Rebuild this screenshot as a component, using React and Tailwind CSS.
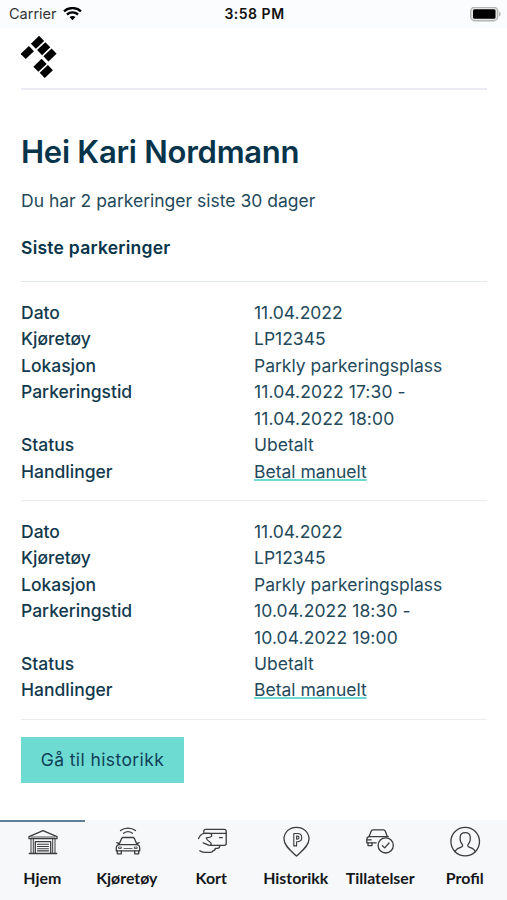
import React, { useState } from "react";

const parkings = [
  {
    id: 1,
    date: "11.04.2022",
    vehicle: "LP12345",
    location: "Parkly parkeringsplass",
    from: "11.04.2022 17:30",
    to: "11.04.2022 18:00",
    status: "Ubetalt",
  },
  {
    id: 2,
    date: "11.04.2022",
    vehicle: "LP12345",
    location: "Parkly parkeringsplass",
    from: "10.04.2022 18:30",
    to: "10.04.2022 19:00",
    status: "Ubetalt",
  },
];

function Icon({ children }) {
  return (
    <svg
      className="overflow-visible"
      width="32"
      height="32"
      viewBox="0 0 32 32"
      fill="none"
      stroke="#3a3c3e"
      strokeWidth="1.3"
      strokeLinecap="round"
      strokeLinejoin="round"
    >
      {children}
    </svg>
  );
}

function GarageIcon() {
  return (
    <Icon>
      <path d="M3 11.700 17 5.600l14 6.100v2H3z" />
      <path d="M5 12h24" strokeWidth="0.9" />
      <path d="M5 13.700v14.600M29 13.700v14.600M7.300 14v14.200M26.700 14v14.200" strokeWidth="1" />
      <path d="M9.300 28.200V16.700h15.400v11.500" />
      <path d="M11.500 19.300h11M11.500 21.500h11M11.500 23.700h11M11.500 25.900h11" strokeWidth="1.1" />
      <path d="M3.300 28.500h27.400" />
    </Icon>
  );
}

function CarIcon() {
  return (
    <Icon>
      <path d="M9.500 5.600c4.300-3.300 10.700-3.300 15 0M12.600 8.300c2.600-1.900 6.200-1.900 8.800 0" />
      <path d="m8 19.500 2.600-6c.3-.7.800-1 1.600-1h9.600c.8 0 1.300.3 1.600 1l2.600 6" />
      <path d="M7.500 19.600h19c1.500.8 2.200 1.700 2.200 3v3.300H5.300v-3.300c0-1.300.7-2.200 2.200-3z" />
      <path d="M6.300 26v2.800h4V26M23.700 26v2.800h4V26" />
      <path d="M7.900 22h2.400v1.500H7.900zM23.700 22h2.400v1.500h-2.400zM13 23.500h8" strokeWidth="0.8" />
      <path d="m7.700 18.400-1.900-.8M26.300 18.400l1.900-.8" />
    </Icon>
  );
}

function CardIcon() {
  return (
    <Icon>
      <path d="M8.800 7.500V6.300c0-1.300.6-1.900 1.800-1.900h18.700c1.200 0 1.900.6 1.900 1.900v12.200c0 1.200-.7 1.800-1.900 1.800H15.200" />
      <path d="M9.600 8.300h21.500M24.500 12.600h2.800" />
      <path d="M3.500 13.500c1.300-2.900 3.300-5 6.100-5.100h4.600c3 0 3.300 2.700 1.300 3.600-1.400.6-2.800.8-4.200 1 .3 1.700 1.500 2.700 3 3.500 1.300.8 2.200 1.600 1.900 2.700-.3 1-1.500 1.300-2.600.9l-5.400-2.300" />
      <path d="M24.800 20.500c0 2-.8 2.900-2.600 2.900h-1.900c-.1 1.500-.8 2.200-2.300 2.300-.4 1.100-1.100 1.600-2.500 1.600h-6c-2 0-3.300-.5-4.700-1.500" />
    </Icon>
  );
}

function ParkingPinIcon() {
  return (
    <Icon>
      <path d="M16.500 31C11.700 26.300 4 21.200 4 14.100 4 7.200 9.500 2.300 16.500 2.300S29 7.200 29 14.100c0 7.100-7.700 12.200-12.500 16.900z" />
      <path d="M13.800 20.900V8.500h3.900c5.400 0 5.400 8.200 0 8.200h-1.100v4.200zM16.600 11.100v3h1c1.900 0 1.900-3 0-3z" strokeWidth="1.100" />
    </Icon>
  );
}

function PermitIcon() {
  return (
    <Icon>
      <path d="M5 11.700 7.200 6c.3-.8.800-1.200 1.700-1.200h10.600c.9 0 1.400.4 1.700 1.200l2.200 5.700" />
      <path d="M4.600 11.700h19.700M4.600 11.700c-1.200.6-1.800 1.500-1.800 2.700v3.400h9.400" />
      <path d="M3 14.800h4.200M4 18v2.600h4V18" />
      <circle cx="21.700" cy="20.400" r="7.600" fill="#f7f8fa" />
      <path d="m18.400 20.700 2.300 2.200 4.300-4.900" />
    </Icon>
  );
}

function ProfileIcon() {
  return (
    <Icon>
      <circle cx="16.200" cy="16.600" r="14.300" />
      <path d="M6.200 26.700c.7-3.200 3.600-3.600 6-4.500 1.500-.6 1.900-2.100.8-3.200-2.100-2.200-2-5.400-1.800-7.300.3-2.600 2.300-4 5-4s4.700 1.400 5 4c.2 1.900.3 5.100-1.800 7.300-1.100 1.100-.7 2.600.8 3.200 2.400.9 5.300 1.300 6 4.500" />
    </Icon>
  );
}

const tabs = [
  { id: "home", label: "Hjem", icon: GarageIcon },
  { id: "vehicle", label: "Kjøretøy", icon: CarIcon },
  { id: "card", label: "Kort", icon: CardIcon },
  { id: "history", label: "Historikk", icon: ParkingPinIcon },
  { id: "permits", label: "Tillatelser", icon: PermitIcon },
  { id: "profile", label: "Profil", icon: ProfileIcon },
];

function StatusBar() {
  return (
    <div className="grid h-7 grid-cols-3 items-center bg-[#fafcfd] pl-[9px] pr-[6px] text-[14px] text-[#111]">
      <div className="flex items-center gap-[6px] text-[#333]">
        <span className="text-[14.500px]">Carrier</span>
        <svg width="19" height="15" viewBox="0 0 19 15" fill="none" stroke="#000" strokeWidth="2.400">
          <path d="M1 4.300c4.700-4.300 12.300-4.300 17 0" />
          <path d="M4 7.500c3.100-2.800 7.900-2.800 11 0" />
          <path d="m9.500 13.300-3-3.200c1.700-1.500 4.300-1.500 6 0z" fill="#000" stroke="none" />
        </svg>
      </div>
      <span className="-ml-px text-center font-semibold tracking-[0.500px]">3:58 PM</span>
      <svg className="justify-self-end" width="31" height="15" viewBox="0 0 31 15">
        <rect x="0.700" y="0.200" width="27" height="13.600" rx="4" fill="#e5e6e4" stroke="#b4b6b3" strokeWidth="1.400" />
        <rect x="3" y="2.300" width="22.500" height="9.400" rx="1.500" fill="#000" />
        <path d="M29 4.500v5c2.200-.8 2.200-4.200 0-5z" fill="#b4b6b3" />
      </svg>
    </div>
  );
}

function Logo() {
  return (
    <svg width="36" height="42" viewBox="0 0 36 42" fill="#000">
      <rect x="-5.700" y="-3.600" width="11.400" height="7.200" transform="translate(6.300 16.500) rotate(-44)" />
      <rect x="-5.700" y="-3.600" width="11.400" height="7.200" transform="translate(16.500 6.300) rotate(-44)" />
      <rect x="-5.700" y="-3.600" width="11.400" height="7.200" transform="translate(22.700 12.700) rotate(-44)" />
      <rect x="-5.700" y="-3.600" width="11.400" height="7.200" transform="translate(29 19) rotate(-44)" />
      <rect x="-5.700" y="-3.600" width="11.400" height="7.200" transform="translate(19 29.300) rotate(-44)" />
      <rect x="-5.700" y="-3.600" width="11.400" height="7.200" transform="translate(25.300 35.500) rotate(-44)" />
    </svg>
  );
}

function Row({ label, children }) {
  return (
    <div className="grid grid-cols-2">
      <dt className="font-medium text-[#12394d]">{label}</dt>
      <dd>{children}</dd>
    </div>
  );
}

function ParkingItem({ parking }) {
  return (
    <dl className="border-b border-[#eaecef] pt-[18.250px] pb-[14.800px]">
      <Row label="Dato">{parking.date}</Row>
      <Row label="Kjøretøy">{parking.vehicle}</Row>
      <Row label="Lokasjon">{parking.location}</Row>
      <Row label="Parkeringstid">
        <span className="tracking-[0.100px]">
          {parking.from} -<br />
          {parking.to}
        </span>
      </Row>
      <Row label="Status">{parking.status}</Row>
      <Row label="Handlinger">
        <a
          href="#"
          className="underline decoration-[#6edbd3] decoration-[1.500px] underline-offset-1"
        >
          Betal manuelt
        </a>
      </Row>
    </dl>
  );
}

function App() {
  const [activeTab, setActiveTab] = useState("home");

  return (
    <div className="flex h-screen flex-col overflow-hidden bg-white font-['Inter',sans-serif] text-[17.500px] leading-[26.400px] text-[#24495b]">
      <StatusBar />

      {/* Header */}
      <header className="mr-5 ml-[21px] flex h-[62px] items-start border-b-2 border-[#e9eaf5] pt-2">
        <Logo />
      </header>

      {/* Content */}
      <main className="flex-1 pt-[42px] pr-5 pl-[21px]">
        <h1 className="text-[31px] leading-10 font-semibold tracking-[-0.250px] text-[#06344b]">
          Hei Kari Nordmann
        </h1>
        <p className="mt-[16px]">Du har 2 parkeringer siste 30 dager</p>
        <h2 className="mt-[21px] font-semibold tracking-[0.250px] text-[#06344b]">
          Siste parkeringer
        </h2>

        <div className="mt-[19px] border-t border-[#e3e8eb]">
          {parkings.map((parking) => (
            <ParkingItem key={parking.id} parking={parking} />
          ))}
        </div>

        <button className="mt-[17px] h-[46px] w-[163px] bg-[#6edbd3] pt-0.5 tracking-[0.400px] text-[#0f4156]">
          Gå til historikk
        </button>
      </main>

      {/* Bottom navigation */}
      <nav className="grid h-20 grid-cols-6 bg-[#f7f8fa]">
        {tabs.map(({ id, label, icon: TabIcon }) => (
          <button
            key={id}
            onClick={() => setActiveTab(id)}
            className={
              activeTab === id
                ? "flex flex-col items-center border-t-2 border-[#5f8196] pt-[3px]"
                : "flex flex-col items-center border-t-2 border-transparent pt-[3px]"
            }
          >
            <TabIcon />
            <span className="mt-[9px] font-['Lato',sans-serif] text-[15.900px] leading-6 font-bold whitespace-nowrap text-[#15171a]">
              {label}
            </span>
          </button>
        ))}
      </nav>
    </div>
  );
}

export default App;
